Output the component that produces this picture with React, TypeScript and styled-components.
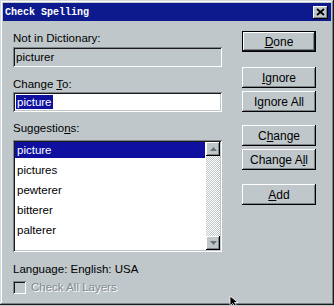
import styled, { createGlobalStyle } from 'styled-components';

const GlobalStyle = createGlobalStyle`
  html, body {
    margin: 0;
    padding: 0;
    background: #c0c7cb;
  }
`;

const FACE = '#bfc7cb';
const NAVY = '#0d1a8e';
const SELECT = '#0f10a0';

const suggestions = ['picture', 'pictures', 'pewterer', 'bitterer', 'palterer'];

const App = () => {
  return (
    <>
      <GlobalStyle />
      <Window>
        <TitleBar>
          <Title>Check Spelling</Title>
          <CloseBtn>
            <svg width="9" height="8" viewBox="0 0 9 8">
              <path d="M1 1 L8 7 M8 1 L1 7" stroke="#000" strokeWidth="1.8" />
            </svg>
          </CloseBtn>
        </TitleBar>
        <Body>
          <LeftCol>
            <Label $top={0}>Not in Dictionary:</Label>
            <Field $disabled>picturer</Field>
            <Label $top={10}>
              Change <u>T</u>o:
            </Label>
            <Field $top={1}>
              <Selected>picture</Selected>
            </Field>
            <Label $top={9}>
              Suggestio<u>n</u>s:
            </Label>
            <ListBox>
              <ListItems>
                {suggestions.map((s, i) => (
                  <Row key={s}>
                    <RowText $active={i === 0}>{s}</RowText>
                  </Row>
                ))}
              </ListItems>
              <ScrollBar>
                <ScrollBtn>
                  <svg width="7" height="4" viewBox="0 0 7 4">
                    <path d="M3.5 0 L7 4 L0 4 Z" fill="#6a7276" />
                  </svg>
                </ScrollBtn>
                <Track />
                <ScrollBtn>
                  <svg width="7" height="4" viewBox="0 0 7 4">
                    <path d="M0 0 L7 0 L3.5 4 Z" fill="#6a7276" />
                  </svg>
                </ScrollBtn>
              </ScrollBar>
            </ListBox>
            <Label $top={10}>Language: English: USA</Label>
            <CheckRow>
              <CheckBox />
              <DisabledText>Check All Layers</DisabledText>
            </CheckRow>
          </LeftCol>
          <RightCol>
            <Button $default>
              <u>D</u>one
            </Button>
            <Button $top={15}>
              <u>I</u>gnore
            </Button>
            <Button $top={3}>
              I<u>g</u>nore All
            </Button>
            <Button $top={13}>
              C<u>h</u>ange
            </Button>
            <Button $top={3}>
              Change A<u>l</u>l
            </Button>
            <Button $top={14}>
              <u>A</u>dd
            </Button>
          </RightCol>
        </Body>
        <Cursor width="12" height="10" viewBox="0 0 12 10">
          <path d="M1 0 L1 10 L3.5 7.5 L6 10 L8 10 L5.5 6.5 L9 6.5 Z" fill="#000" stroke="#fff" strokeWidth="0.8" />
        </Cursor>
      </Window>
    </>
  );
};

export default App;

const Window = styled.div`
  position: relative;
  width: 334px;
  height: 305px;
  box-sizing: border-box;
  padding: 3px;
  background: ${FACE};
  box-shadow: inset -1px -1px #1a1a1a, inset 1px 1px #d4dadc, inset -2px -2px #7c8488,
    inset 2px 2px #ffffff;
  overflow: hidden;
  font-family: 'Liberation Sans', Arial, sans-serif;
  font-size: 11.5px;
  color: #000;
`;

const TitleBar = styled.div`
  display: flex;
  align-items: center;
  justify-content: space-between;
  height: 18px;
  padding: 0 3px 0 2px;
  background: ${NAVY};
`;

const Title = styled.span`
  font-family: 'Liberation Mono', 'Courier New', monospace;
  font-weight: bold;
  font-size: 10px;
  color: #fff;
`;

const CloseBtn = styled.div`
  display: flex;
  align-items: center;
  justify-content: center;
  width: 15px;
  height: 13px;
  background: ${FACE};
  box-shadow: inset -1px -1px #000, inset 1px 1px #fff, inset -2px -2px #7c8488;
`;

const Body = styled.div`
  display: flex;
  gap: 20px;
  padding: 10px 0 0 10px;
`;

const LeftCol = styled.div`
  display: flex;
  flex-direction: column;
  width: 209px;
`;

const RightCol = styled.div`
  display: flex;
  flex-direction: column;
  width: 74px;
  font-size: 12px;
`;

const Label = styled.div<{ $top?: number }>`
  height: 14px;
  line-height: 14px;
  margin-top: ${p => p.$top ?? 0}px;
  white-space: nowrap;

  u {
    text-decoration-thickness: 1px;
    text-underline-offset: 1px;
  }
`;

const Field = styled.div<{ $disabled?: boolean; $top?: number }>`
  display: flex;
  align-items: center;
  height: 20px;
  margin-top: ${p => p.$top ?? 2}px;
  padding: 0 3px;
  box-sizing: border-box;
  background: ${p => (p.$disabled ? FACE : '#ffffff')};
  box-shadow: inset 1px 1px #7c8488, inset -1px -1px #ffffff, inset 2px 2px #1a1a1a,
    inset -2px -2px ${FACE};
`;

const Selected = styled.span`
  background: ${SELECT};
  color: #fff;
  line-height: 14px;
  padding: 0 1px;
`;

const ListBox = styled.div`
  display: flex;
  height: 112px;
  margin-top: 5px;
  padding: 2px;
  box-sizing: border-box;
  background: #fff;
  box-shadow: inset 1px 1px #7c8488, inset -1px -1px #ffffff, inset 2px 2px #1a1a1a,
    inset -2px -2px ${FACE};
`;

const ListItems = styled.div`
  flex: 1;
  display: flex;
  flex-direction: column;
  padding: 0 1px 0 0;
`;

const Row = styled.div`
  height: 20px;
`;

const RowText = styled.div<{ $active?: boolean }>`
  height: 16px;
  line-height: 16px;
  padding-left: 2px;
  background: ${p => (p.$active ? SELECT : 'transparent')};
  color: ${p => (p.$active ? '#fff' : '#000')};
`;

const ScrollBar = styled.div`
  display: flex;
  flex-direction: column;
  width: 14px;
`;

const ScrollBtn = styled.div`
  display: flex;
  align-items: center;
  justify-content: center;
  height: 14px;
  background: ${FACE};
  box-shadow: inset -1px -1px #000, inset 1px 1px #fff, inset -2px -2px #7c8488;
`;

const Track = styled.div`
  flex: 1;
  background-color: #e4e8ea;
  background-image: repeating-conic-gradient(#bfc7cb 0 25%, #ffffff 0 50%);
  background-size: 2px 2px;
`;

const CheckRow = styled.div`
  display: flex;
  align-items: center;
  gap: 5px;
  margin-top: 4px;
  height: 14px;
`;

const CheckBox = styled.div`
  width: 13px;
  height: 13px;
  box-sizing: border-box;
  background: ${FACE};
  box-shadow: inset 1px 1px #7c8488, inset -1px -1px #ffffff, inset 2px 2px #1a1a1a,
    inset -2px -2px ${FACE};
`;

const DisabledText = styled.span`
  color: #838b8f;
  text-shadow: 1px 1px #ffffff;
`;

const Button = styled.div<{ $top?: number; $default?: boolean }>`
  display: flex;
  align-items: center;
  justify-content: center;
  height: 21px;
  margin-top: ${p => p.$top ?? 0}px;
  background: ${FACE};
  box-shadow: ${p =>
    p.$default
      ? 'inset -1px -1px #000, inset 1px 1px #000, inset -2px -2px #1a1a1a, inset 2px 2px #fff, inset -3px -3px #7c8488'
      : 'inset -1px -1px #000, inset 1px 1px #fff, inset -2px -2px #7c8488'};
  white-space: nowrap;

  u {
    text-decoration-thickness: 1px;
    text-underline-offset: 1px;
  }
`;

const Cursor = styled.svg`
  position: absolute;
  left: 229px;
  top: 296px;
`;
